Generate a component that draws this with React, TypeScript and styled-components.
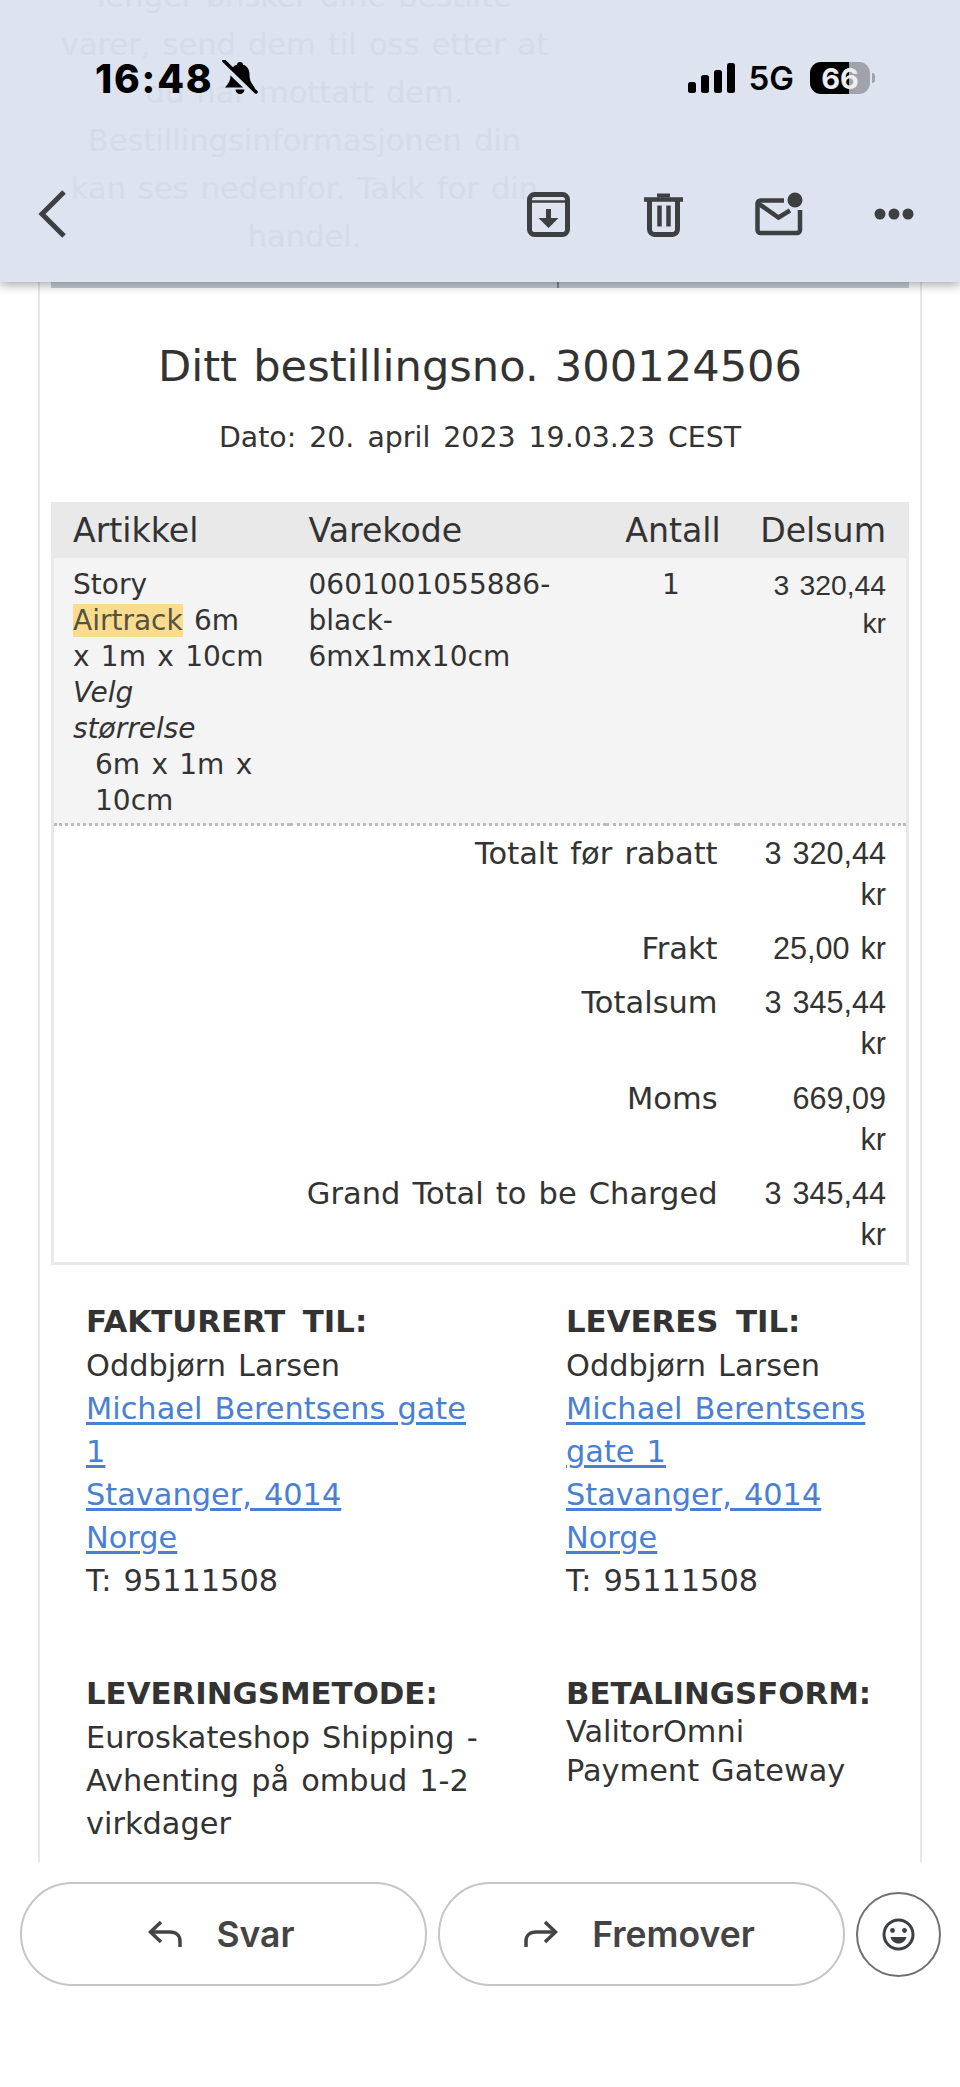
import styled, { createGlobalStyle } from 'styled-components';

const sans = `'DejaVu Sans', Verdana, sans-serif`;
const arial = `'Liberation Sans', Arial, sans-serif`;
const ui = `Inter, 'Noto Sans', sans-serif`;

const GlobalStyle = createGlobalStyle`
  html, body {
    margin: 0;
    padding: 0;
    background: #fff;
  }
  * {
    box-sizing: border-box;
  }
`;

const St = {
  Page: styled.div`
    width: 960px;
    height: 2087px;
    display: flex;
    flex-direction: column;
    overflow: hidden;
    background: #fff;
    color: #333;
    font-family: ${sans};
    word-spacing: 0.15em;
  `,

  Header: styled.header`
    position: relative;
    z-index: 2;
    flex: none;
    height: 282px;
    overflow: hidden;
    background: #dde3ef;
    box-shadow: 0 3px 10px rgba(40, 40, 40, 0.4);
  `,
  GhostText: styled.div`
    position: absolute;
    top: -27px;
    left: 52px;
    width: 505px;
    height: 320px;
    text-align: center;
    font-size: 30.5px;
    line-height: 48px;
    color: #d5dbe8;
    white-space: nowrap;
  `,
  StatusBar: styled.div`
    position: relative;
    display: flex;
    justify-content: space-between;
    align-items: center;
    height: 36px;
    margin-top: 60px;
    padding: 0 85px 0 95px;
    color: #000;
    font-family: ${ui};
  `,
  StatusGroup: styled.div`
    display: flex;
    align-items: center;
  `,
  Time: styled.span`
    font-size: 39px;
    font-weight: 800;
    letter-spacing: 1.8px;
    margin-right: 8px;
  `,
  Network: styled.span`
    margin: 0 16px 0 14px;
    font-size: 33px;
    font-weight: 600;
  `,
  Battery: styled.span`
    display: flex;
    justify-content: center;
    align-items: center;
    width: 60px;
    height: 32px;
    border-radius: 11px;
    background: linear-gradient(90deg, #000 65%, #a0a3ac 65%);
    color: #eceef3;
    font-size: 29px;
    font-weight: 700;
  `,
  BatteryNub: styled.span`
    width: 3px;
    height: 10px;
    margin-left: 2px;
    border-radius: 0 3px 3px 0;
    background: #a0a3ac;
  `,
  Toolbar: styled.div`
    position: relative;
    display: flex;
    justify-content: space-between;
    align-items: center;
    height: 60px;
    margin-top: 88px;
    padding: 0 9px 0 37px;
    color: #3c4043;
  `,
  ToolActions: styled.div`
    display: flex;
  `,
  ToolSlot: styled.span`
    display: flex;
    justify-content: center;
    align-items: center;
    width: 115px;
    height: 60px;
  `,

  Scroll: styled.main`
    flex: 1;
    min-height: 0;
    overflow: hidden;
  `,
  Card: styled.div`
    margin: 0 38px;
    padding: 0 11px;
    border: solid #e6e7ea;
    border-width: 0 2px;
    height: 100%;
  `,
  Band: styled.div`
    height: 6px;
    background: linear-gradient(
      90deg,
      #c4ced9 506px,
      #7b8590 506px,
      #7b8590 508px,
      #c4ced9 508px
    );
  `,
  Title: styled.h1`
    margin: 53px 0 0;
    text-align: center;
    font-size: 43.2px;
    line-height: 50px;
    font-weight: 400;
    color: #333;
  `,
  OrderDate: styled.p`
    margin: 27px 0 0;
    text-align: center;
    font-size: 28.4px;
    word-spacing: 0.14em;
    line-height: 40px;
    color: #333;
  `,

  TableBox: styled.div`
    margin-top: 44px;
    border: solid #e9e9e9;
    border-width: 0 3px 3px;
  `,
  Table: styled.table`
    width: 100%;
    table-layout: fixed;
    border-collapse: collapse;
    font-size: 28px;
    color: #333;
  `,
  HeadCell: styled.th<{ $align?: string }>`
    height: 56px;
    padding: 0 20px 0 19px;
    background: #e9e9e9;
    text-align: ${(p) => p.$align ?? 'left'};
    font-size: 33.2px;
    font-weight: 400;
  `,
  ItemCell: styled.td<{ $align?: string }>`
    padding: 9px 20px 4px 19px;
    vertical-align: top;
    background: #f4f4f4;
    border-bottom: 3px dotted #bcbcbc;
    text-align: ${(p) => p.$align ?? 'left'};
    line-height: 36px;
    white-space: nowrap;
  `,
  ItemPrice: styled.td`
    padding: 8px 20px 4px 23px;
    vertical-align: top;
    background: #f4f4f4;
    border-bottom: 3px dotted #bcbcbc;
    text-align: right;
    font-family: ${arial};
    font-size: 28.3px;
    line-height: 38px;
  `,
  Highlight: styled.span`
    background: #fbdc8e;
    color: #55523f;
  `,
  OptionName: styled.em`
    font-style: italic;
  `,
  OptionValue: styled.div`
    padding-left: 22px;
  `,
  TotalLabel: styled.td`
    padding: 6.700px 19px 6.700px 19px;
    vertical-align: top;
    text-align: right;
    font-size: 30.5px;
    line-height: 41px;
  `,
  TotalValue: styled.td`
    padding: 6.700px 20px 6.700px 23px;
    vertical-align: top;
    text-align: right;
    font-family: ${arial};
    font-size: 30.6px;
    line-height: 41px;
  `,

  InfoGrid: styled.section`
    display: grid;
    grid-template-columns: 402px 340px;
    column-gap: 78px;
    margin: 0 -11px;
    padding: 33px 0 0 46px;
  `,
  InfoBlock: styled.div<{ $gap?: number }>`
    padding-bottom: ${(p) => p.$gap ?? 0}px;
    font-size: 30.4px;
    line-height: 43px;
  `,
  InfoTitle: styled.div`
    font-size: 30.8px;
    font-weight: 700;
    word-spacing: 0.22em;
    line-height: 46px;
  `,
  InfoLink: styled.a`
    color: #4a80d4;
    text-decoration: underline;
    text-underline-offset: 3px;
  `,
  Payment: styled.div`
    margin-top: -4px;
    line-height: 39px;
  `,

  Footer: styled.footer`
    flex: none;
    display: flex;
    align-items: flex-start;
    gap: 11px;
    height: 225px;
    padding: 20px 0 0 20px;
    background: #fff;
    color: #444;
    font-family: ${ui};
  `,
  PillButton: styled.div`
    display: flex;
    justify-content: center;
    align-items: center;
    gap: 33px;
    width: 407px;
    height: 104px;
    padding-right: 5px;
    border: 2.5px solid #c6c6c6;
    border-radius: 52px;
    font-size: 35.5px;
    font-weight: 600;
  `,
  EmojiButton: styled.div`
    display: flex;
    justify-content: center;
    align-items: center;
    width: 85px;
    height: 85px;
    margin-top: 10px;
    border: 2px solid #707070;
    border-radius: 50%;
  `,
};

const BellOff = () => (
  <svg width="36" height="36" viewBox="0 0 36 36">
    <path d="M18 2c-2 0-3 1.200-3 2.800C10.500 6 8.500 9.800 8.500 15c0 6-2.500 9-5.500 12.500h30C30 24 27.500 21 27.500 15c0-5.200-2-9-6.500-10.200C21 3.200 20 2 18 2z" fill="#000" />
    <path d="M13.500 29.500a4.500 4.500 0 0 0 9 0z" fill="#000" />
    <path d="M1 4l32 31" stroke="#dde3ef" strokeWidth="6" />
    <path d="M2 1l32 31" stroke="#000" strokeWidth="3.500" strokeLinecap="round" />
  </svg>
);

const Signal = () => (
  <svg width="47" height="30" viewBox="0 0 47 30">
    <rect x="0" y="19" width="8" height="11" rx="2.500" fill="#000" />
    <rect x="13" y="12" width="8" height="18" rx="2.500" fill="#000" />
    <rect x="26" y="7" width="8" height="23" rx="2.500" fill="#000" />
    <rect x="39" y="0" width="8" height="30" rx="2.500" fill="#000" />
  </svg>
);

const BackIcon = () => (
  <svg width="32" height="50" viewBox="0 0 32 50" fill="none">
    <path d="M27 3L5 25l22 22" stroke="currentColor" strokeWidth="5" />
  </svg>
);

const ArchiveIcon = () => (
  <svg width="43" height="45" viewBox="0 0 43 45" fill="none">
    <rect x="2.500" y="2.500" width="38" height="40" rx="5" stroke="currentColor" strokeWidth="5" />
    <path d="M3 9.500h37" stroke="currentColor" strokeWidth="2.500" />
    <path d="M19 17h5v9h7.500L21.500 36 11.500 26H19z" fill="currentColor" />
  </svg>
);

const TrashIcon = () => (
  <svg width="40" height="45" viewBox="0 0 40 45" fill="none">
    <path d="M0 7.500h39" stroke="currentColor" strokeWidth="4.500" />
    <path d="M13 3.500h13" stroke="currentColor" strokeWidth="4" />
    <path d="M5.500 8v29c0 3 2 5.500 5 5.500h18c3 0 5-2.500 5-5.500V8" stroke="currentColor" strokeWidth="5" />
    <path d="M15.500 13.500v21M24.500 13.500v21" stroke="currentColor" strokeWidth="4.500" />
  </svg>
);

const MailDotIcon = () => (
  <svg width="48" height="45" viewBox="0 0 48 45" fill="none">
    <circle cx="40" cy="8" r="7.500" fill="currentColor" />
    <path d="M29 8.500H5.500a3 3 0 0 0-3 3V38a3 3 0 0 0 3 3H42a3 3 0 0 0 3-3V18" stroke="currentColor" strokeWidth="4.500" />
    <path d="M4 12l19.500 13.500L35 18.500" stroke="currentColor" strokeWidth="4.500" />
  </svg>
);

const MoreIcon = () => (
  <svg width="40" height="12" viewBox="0 0 40 12">
    <circle cx="6" cy="6" r="5.500" fill="currentColor" />
    <circle cx="20" cy="6" r="5.500" fill="currentColor" />
    <circle cx="34" cy="6" r="5.500" fill="currentColor" />
  </svg>
);

const ReplyIcon = () => (
  <svg width="36" height="30" viewBox="0 0 36 30" fill="none">
    <path d="M14 3L3.500 13 14 23" stroke="currentColor" strokeWidth="3.500" />
    <path d="M4 13h19c6 0 10 3.500 10 9v6" stroke="currentColor" strokeWidth="3.500" />
  </svg>
);

const ForwardIcon = () => (
  <svg width="36" height="30" viewBox="0 0 36 30" fill="none">
    <path d="M22 3l10.500 10L22 23" stroke="currentColor" strokeWidth="3.500" />
    <path d="M32 13H13C7 13 3 16.500 3 22v6" stroke="currentColor" strokeWidth="3.500" />
  </svg>
);

const SmileIcon = () => (
  <svg width="33" height="33" viewBox="0 0 33 33" fill="none">
    <circle cx="16.500" cy="16.500" r="14.500" stroke="#3c4043" strokeWidth="3" />
    <circle cx="10.500" cy="12.500" r="2.400" fill="#3c4043" />
    <circle cx="22.500" cy="12.500" r="2.400" fill="#3c4043" />
    <path d="M8.500 19h16c-1 4-4 6.500-8 6.500s-7-2.500-8-6.500z" fill="#3c4043" />
  </svg>
);

const totals = [
  { label: 'Totalt før rabatt', value: '3 320,44 kr' },
  { label: 'Frakt', value: '25,00 kr' },
  { label: 'Totalsum', value: '3 345,44 kr' },
  { label: 'Moms', value: '669,09 kr' },
  { label: 'Grand Total to be Charged', value: '3 345,44 kr' },
];

const Address = ({ title }: { title: string }) => (
  <St.InfoBlock $gap={68}>
    <St.InfoTitle>{title}</St.InfoTitle>
    Oddbjørn Larsen
    <br />
    <St.InfoLink>Michael Berentsens gate 1</St.InfoLink>
    <br />
    <St.InfoLink>Stavanger, 4014</St.InfoLink>
    <br />
    <St.InfoLink>Norge</St.InfoLink>
    <br />
    T: 95111508
  </St.InfoBlock>
);

const App = () => {
  return (
    <St.Page>
      <GlobalStyle />
      <St.Header>
        <St.GhostText>
          lenger ønsker dine bestilte
          <br />
          varer, send dem til oss etter at
          <br />
          du har mottatt dem.
          <br />
          Bestillingsinformasjonen din
          <br />
          kan ses nedenfor. Takk for din
          <br />
          handel.
        </St.GhostText>
        <St.StatusBar>
          <St.StatusGroup>
            <St.Time>16:48</St.Time>
            <BellOff />
          </St.StatusGroup>
          <St.StatusGroup>
            <Signal />
            <St.Network>5G</St.Network>
            <St.Battery>66</St.Battery>
            <St.BatteryNub />
          </St.StatusGroup>
        </St.StatusBar>
        <St.Toolbar>
          <BackIcon />
          <St.ToolActions>
            <St.ToolSlot>
              <ArchiveIcon />
            </St.ToolSlot>
            <St.ToolSlot>
              <TrashIcon />
            </St.ToolSlot>
            <St.ToolSlot>
              <MailDotIcon />
            </St.ToolSlot>
            <St.ToolSlot>
              <MoreIcon />
            </St.ToolSlot>
          </St.ToolActions>
        </St.Toolbar>
      </St.Header>

      <St.Scroll>
        <St.Card>
          <St.Band />
          <St.Title>Ditt bestillingsno. 300124506</St.Title>
          <St.OrderDate>Dato: 20. april 2023 19.03.23 CEST</St.OrderDate>

          <St.TableBox>
            <St.Table>
              <colgroup>
                <col width="235" />
                <col width="316" />
                <col width="130" />
                <col width="169" />
              </colgroup>
              <thead>
                <tr>
                  <St.HeadCell>Artikkel</St.HeadCell>
                  <St.HeadCell>Varekode</St.HeadCell>
                  <St.HeadCell $align="center">Antall</St.HeadCell>
                  <St.HeadCell $align="right">Delsum</St.HeadCell>
                </tr>
              </thead>
              <tbody>
                <tr>
                  <St.ItemCell>
                    Story
                    <br />
                    <St.Highlight>Airtrack</St.Highlight> 6m
                    <br />x 1m x 10cm
                    <br />
                    <St.OptionName>
                      Velg
                      <br />
                      størrelse
                    </St.OptionName>
                    <St.OptionValue>
                      6m x 1m x
                      <br />
                      10cm
                    </St.OptionValue>
                  </St.ItemCell>
                  <St.ItemCell>
                    0601001055886-
                    <br />
                    black-
                    <br />
                    6mx1mx10cm
                  </St.ItemCell>
                  <St.ItemCell $align="center">1</St.ItemCell>
                  <St.ItemPrice>3 320,44 kr</St.ItemPrice>
                </tr>
              </tbody>
              <tfoot>
                {totals.map((row) => (
                  <tr key={row.label}>
                    <St.TotalLabel colSpan={3}>{row.label}</St.TotalLabel>
                    <St.TotalValue>{row.value}</St.TotalValue>
                  </tr>
                ))}
              </tfoot>
            </St.Table>
          </St.TableBox>

          <St.InfoGrid>
            <Address title="FAKTURERT TIL:" />
            <Address title="LEVERES TIL:" />
            <St.InfoBlock>
              <St.InfoTitle>LEVERINGSMETODE:</St.InfoTitle>
              Euroskateshop Shipping - Avhenting på ombud 1-2 virkdager
            </St.InfoBlock>
            <St.InfoBlock>
              <St.InfoTitle>BETALINGSFORM:</St.InfoTitle>
              <St.Payment>
                ValitorOmni
                <br />
                Payment Gateway
              </St.Payment>
            </St.InfoBlock>
          </St.InfoGrid>
        </St.Card>
      </St.Scroll>

      <St.Footer>
        <St.PillButton>
          <ReplyIcon />
          Svar
        </St.PillButton>
        <St.PillButton>
          <ForwardIcon />
          Fremover
        </St.PillButton>
        <St.EmojiButton>
          <SmileIcon />
        </St.EmojiButton>
      </St.Footer>
    </St.Page>
  );
};

export default App;
